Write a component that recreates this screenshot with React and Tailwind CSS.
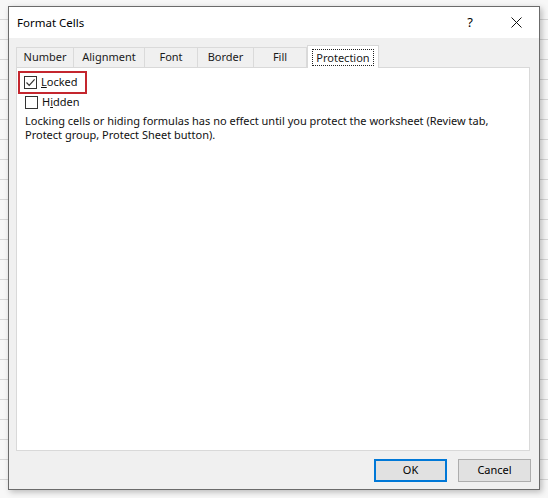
import React from "react";

const tabs = [
  { label: "Number", w: "w-[58px]" },
  { label: "Alignment", w: "w-[71px]" },
  { label: "Font", w: "w-[53px]" },
  { label: "Border", w: "w-[56px]" },
  { label: "Fill", w: "w-[53px]" },
];

const Check = ({ checked }) => (
  <span className="flex h-[13px] w-[13px] items-center justify-center border border-[#333] bg-white">
    {checked && (
      <svg width="11" height="11" viewBox="0 0 11 11">
        <path d="M1.5 5.5 L4.2 8.3 L9.6 2.3" fill="none" stroke="#333" strokeWidth="1.2" />
      </svg>
    )}
  </span>
);

export default function App() {
  return (
    <div
      className="h-[498px] w-[548px] overflow-hidden bg-[#f7f7f7] bg-[repeating-linear-gradient(to_bottom,transparent_0px,transparent_19px,#d6d6d6_19px,#d6d6d6_20px)] pl-[8px] pt-[6px]"
      style={{ fontFamily: '"Noto Sans", "Open Sans", sans-serif' }}
    >
      <div className="flex h-[484px] w-[532px] flex-col border border-[#6b6b6b] bg-[#f0f0f0] shadow-[2px_2px_6px_rgba(0,0,0,0.25)]">
        {/* title bar */}
        <div className="flex h-[31px] items-center bg-white pl-[8px] text-[11.5px] text-black">
          <span className="flex-1">Format Cells</span>
          <span className="w-[46px] text-center text-[13px]">?</span>
          <span className="flex w-[46px] items-center justify-center">
            <svg width="11" height="11" viewBox="0 0 11 11">
              <path d="M0.5 0.5 L10.5 10.5 M10.5 0.5 L0.5 10.5" stroke="#111" strokeWidth="1" />
            </svg>
          </span>
        </div>

        {/* tabs */}
        <div className="mt-[7px] flex h-[22px] items-end pl-[7px] text-[11px] text-[#1a1a1a]">
          {tabs.map((t, i) => (
            <div
              key={t.label}
              className={`flex h-[20px] ${t.w} items-center justify-center border-t border-[#dadada] ${
                i === 0 ? "border-l" : ""
              } border-r`}
            >
              {t.label}
            </div>
          ))}
          <div className="relative -mb-px flex h-[23px] w-[72px] items-center justify-center border border-b-0 border-[#d9d9d9] bg-white">
            <span className="border border-dotted border-[#222] px-[3px] leading-[15px]">Protection</span>
          </div>
        </div>

        {/* panel */}
        <div className="ml-[7px] flex h-[384px] w-[514px] flex-col border border-[#d9d9d9] bg-white pl-[1px] pt-[3px] text-[11px] text-[#111]">
          <div className="flex h-[23px] w-[69px] items-center gap-[4px] border-2 border-[#c4262e] pl-[4px]">
            <Check checked />
            <span>
              <span className="underline">L</span>ocked
            </span>
          </div>
          <div className="flex h-[17px] items-center gap-[4px] pl-[7px]">
            <Check />
            <span>
              H<span className="underline">i</span>dden
            </span>
          </div>
          <p className="mt-[3px] whitespace-nowrap pl-[7px] leading-[14px]">
            Locking cells or hiding formulas has no effect until you protect the worksheet (Review tab,
            <br />
            Protect group, Protect Sheet button).
          </p>
        </div>

        {/* buttons */}
        <div className="mt-[8px] flex justify-end gap-[11px] pr-[8px] text-[11px] text-black">
          <button className="h-[23px] w-[73px] border-2 border-[#0078d7] bg-[#e1e1e1]">OK</button>
          <button className="h-[23px] w-[73px] border border-[#adadad] bg-[#e1e1e1]">Cancel</button>
        </div>
      </div>
    </div>
  );
}
